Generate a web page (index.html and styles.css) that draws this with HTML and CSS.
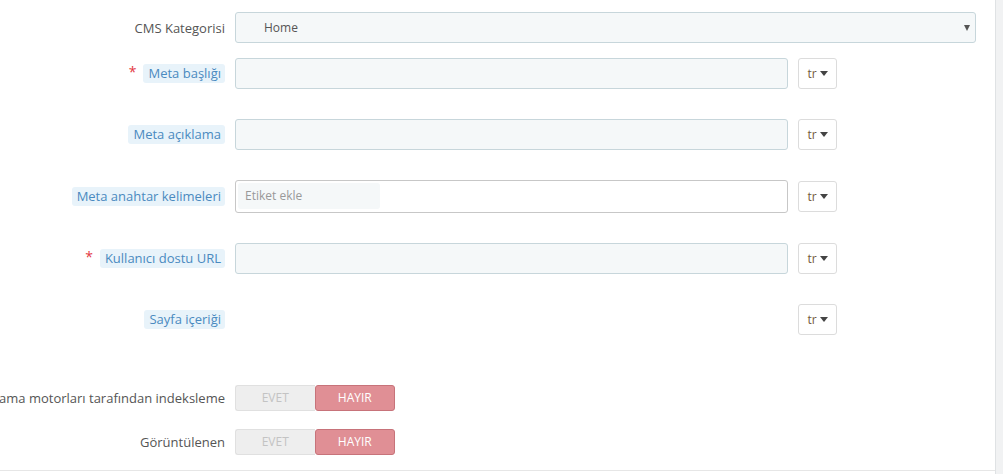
FILE: index.html
```html
<!DOCTYPE html>
<html lang="tr">
<head>
  <meta charset="UTF-8">
  <title>CMS Sayfası</title>
  <link rel="stylesheet" href="styles.css">
</head>
<body>

<div class="panel">
  <div class="form-group row-cms">
    <label class="control-label">CMS Kategorisi</label>
    <div class="select-box">Home<span class="caret"></span></div>
  </div>

  <div class="form-group">
    <label class="control-label"><span class="required">*</span><span class="label-tooltip">Meta başlığı</span></label>
    <input class="form-control" type="text">
    <button class="lang-btn">tr<span class="caret"></span></button>
  </div>

  <div class="form-group">
    <label class="control-label"><span class="label-tooltip">Meta açıklama</span></label>
    <input class="form-control" type="text">
    <button class="lang-btn">tr<span class="caret"></span></button>
  </div>

  <div class="form-group row-tags">
    <label class="control-label"><span class="label-tooltip">Meta anahtar kelimeleri</span></label>
    <div class="tag-box"><span class="tag-input">Etiket ekle</span></div>
    <button class="lang-btn">tr<span class="caret"></span></button>
  </div>

  <div class="form-group">
    <label class="control-label"><span class="required">*</span><span class="label-tooltip">Kullanıcı dostu URL</span></label>
    <input class="form-control" type="text">
    <button class="lang-btn">tr<span class="caret"></span></button>
  </div>

  <div class="form-group row-content">
    <label class="control-label"><span class="label-tooltip">Sayfa içeriği</span></label>
    <div class="editor-space"></div>
    <button class="lang-btn">tr<span class="caret"></span></button>
  </div>

  <div class="form-group row-switch">
    <label class="control-label">Arama motorları tarafından indeksleme</label>
    <div class="switch"><span class="off">EVET</span><span class="on">HAYIR</span></div>
  </div>

  <div class="form-group row-switch last">
    <label class="control-label">Görüntülenen</label>
    <div class="switch"><span class="off">EVET</span><span class="on">HAYIR</span></div>
  </div>

  <div class="panel-footer"></div>
</div>

</body>
</html>
```

FILE: styles.css
```css
body {
  margin: 0;
  background: #f1f2f3;
  font-family: "Open Sans", "Liberation Sans", sans-serif;
  font-size: 13px;
  color: #555;
  overflow: hidden;
}
.panel {
  width: 996px;
  min-height: 474px;
  background: white;
  border-right: 1px solid #dfe2e4;
  padding-top: 12px;
  box-sizing: border-box;
}
.form-group {
  display: flex;
  align-items: center;
  height: 31px;
  margin-bottom: 30px;
}
.form-group.row-cms {
  margin-bottom: 15px;
}
.form-group.row-tags {
  height: 33px;
}
.form-group.row-content {
  margin-bottom: 50px;
}
.form-group.row-switch {
  height: 26px;
  margin-bottom: 18px;
}
.form-group.row-switch.last {
  margin-bottom: 15px;
}
.control-label {
  flex: none;
  width: 225px;
  margin-right: 10px;
  display: flex;
  justify-content: flex-end;
  align-items: center;
  white-space: nowrap;
  color: #555;
}
.required {
  color: #e3383f;
  font-size: 14px;
  margin-right: 7px;
  position: relative;
  top: -2px;
}
.label-tooltip {
  background: #e8f3fa;
  color: #4a8ac0;
  padding: 0 4px 0 5px;
  line-height: 19px;
  border-radius: 3px;
}
.select-box {
  width: 741px;
  height: 31px;
  box-sizing: border-box;
  background: #f5f8f9;
  border: 1px solid #c7d6db;
  border-radius: 3px;
  padding-left: 28px;
  line-height: 29px;
  font-size: 12px;
  color: #555;
  position: relative;
}
.select-box .caret {
  position: absolute;
  right: 5px;
  top: 12px;
  border-top: 6px solid #555;
  border-left: 3px solid transparent;
  border-right: 3px solid transparent;
}
.form-control {
  width: 553px;
  height: 31px;
  box-sizing: border-box;
  background: #f5f8f9;
  border: 1px solid #c7d6db;
  border-radius: 3px;
  margin: 0;
}
.tag-box {
  width: 553px;
  height: 33px;
  box-sizing: border-box;
  border: 1px solid #c7c7c7;
  border-radius: 3px;
  background: white;
  padding: 2px 0 0 2px;
}
.tag-input {
  display: block;
  width: 142px;
  height: 26px;
  background: #f5f8f9;
  border-radius: 3px;
  color: #999;
  font-size: 12px;
  line-height: 26px;
  padding-left: 7px;
  box-sizing: border-box;
}
.editor-space {
  width: 553px;
}
.lang-btn {
  width: 39px;
  height: 31px;
  margin-left: 10px;
  padding: 0;
  background: white;
  border: 1px solid #dcdcdc;
  border-radius: 3px;
  font-family: "Open Sans", "Liberation Sans", sans-serif;
  font-size: 12px;
  color: #725a3b;
  display: flex;
  align-items: center;
  justify-content: center;
}
.lang-btn .caret {
  margin-left: 3px;
  border-top: 5px solid #444;
  border-left: 4px solid transparent;
  border-right: 4px solid transparent;
}
.switch {
  display: flex;
  width: 160px;
  height: 26px;
  font-size: 12px;
  line-height: 24px;
  text-align: center;
}
.switch span {
  flex: 1;
  box-sizing: border-box;
  border-radius: 3px;
}
.switch .off {
  background: #eeeeee;
  border: 1px solid #e0e0e0;
  border-right: none;
  border-radius: 3px 0 0 3px;
  color: #c3c3c3;
}
.switch .on {
  background: #e08f95;
  border: 1px solid #c7737a;
  color: white;
}
.panel-footer {
  border-top: 1px solid #e6e6e6;
}
```
